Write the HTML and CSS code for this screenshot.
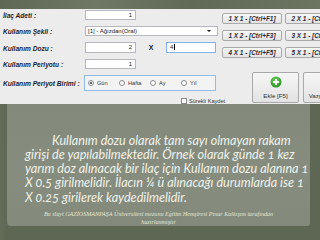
FILE: index.html
```html
<!DOCTYPE html>
<html lang="tr">
<head>
<meta charset="utf-8">
<title>Kullanım dozu</title>
<link rel="stylesheet" href="styles.css">
</head>
<body>
<div class="slide">
  <div class="topstrip"></div>
  <div class="panel">
    <div class="form">
      <div class="lbl">İlaç Adeti :</div>
      <div class="fields"><div class="input num">1</div></div>

      <div class="lbl">Kullanım Şekli :</div>
      <div class="fields"><div class="combo"><span>[1] - Ağızdan(Oral)</span><span class="arrow"></span></div></div>

      <div class="lbl">Kullanım Dozu :</div>
      <div class="fields dose">
        <div class="input num">2</div>
        <div class="times">X</div>
        <div class="input focus">4<span class="caret"></span></div>
      </div>

      <div class="lbl">Kullanım Periyotu :</div>
      <div class="fields"><div class="input num">1</div></div>

      <div class="lbl">Kullanım Periyot Birimi :</div>
      <div class="fields">
        <div class="radios">
          <label class="radio"><span class="dot on"></span>Gün</label>
          <label class="radio"><span class="dot"></span>Hafta</label>
          <label class="radio"><span class="dot"></span>Ay</label>
          <label class="radio"><span class="dot"></span>Yıl</label>
        </div>
      </div>

      <div></div>
      <div class="fields check-row"><span class="box"></span>Sürekli Kaydet</div>
    </div>
    <div class="side">
      <div class="hotkeys">
        <div class="hk">1 X 1 - [Ctrl+F1]</div>
        <div class="hk">2 X 1 - [Ctrl+F2]</div>
        <div class="hk">1 X 2 - [Ctrl+F3]</div>
        <div class="hk">3 X 1 - [Ctrl+F4]</div>
        <div class="hk">4 X 1 - [Ctrl+F5]</div>
        <div class="hk">5 X 1 - [Ctrl+F6]</div>
      </div>
      <div class="actions">
        <div class="big">
          <svg width="12" height="12" viewBox="0 0 12 12">
            <defs>
              <radialGradient id="g" cx="0.45" cy="0.35" r="0.7">
                <stop offset="0" stop-color="#6fd35a"/>
                <stop offset="1" stop-color="#1f8f1c"/>
              </radialGradient>
            </defs>
            <circle cx="6" cy="6" r="5.5" fill="url(#g)"/>
            <path d="M6 3v6M3 6h6" stroke="#fff" stroke-width="2"/>
          </svg>
          <span>Ekle [F5]</span>
        </div>
        <div class="big">
          <svg width="12" height="12" viewBox="0 0 12 12">
            <circle cx="6" cy="6" r="5.5" fill="#d9352c"/>
            <path d="M4 4l4 4M8 4l-4 4" stroke="#fff" stroke-width="1.6"/>
          </svg>
          <span>Vazgeç [Esc]</span>
        </div>
      </div>
    </div>
  </div>
  <div class="paper-area">
    <div class="paper">
      <p class="main">Kullanım dozu olarak tam sayı olmayan rakam<br>girişi de yapılabilmektedir. Örnek olarak günde 1 kez<br>yarım doz alınacak bir ilaç için Kullanım dozu alanına 1<br>X 0.5 girilmelidir. İlacın ¼ ü alınacağı durumlarda ise 1<br>X 0.25 girilerek kaydedilmelidir.</p>
      <p class="credit">Bu slayt GAZİOSMANPAŞA Üniversitesi mezunu Eğitim Hemşiresi Pınar Kalkışım tarafından<br>hazırlanmıştır</p>
    </div>
  </div>
</div>
</body>
</html>
```
FILE: styles.css
```css
* { box-sizing: border-box; }
html, body { margin: 0; padding: 0; }
body { width: 320px; height: 240px; overflow: hidden; }

.slide {
  width: 320px;
  height: 240px;
  display: flex;
  flex-direction: column;
  background: #5d6651;
  font-family: "Liberation Sans", Arial, sans-serif;
}

.topstrip {
  height: 9px;
  background: linear-gradient(90deg, #5e6854 0%, #6f7864 30%, #616a56 60%, #6c7560 100%);
}

.panel {
  height: 96px;
  background: #ececec;
  display: flex;
  overflow: hidden;
}

.form {
  width: 218px;
  flex: none;
  padding: 1px 0 0 3px;
  display: grid;
  grid-template-columns: 82px 1fr;
  grid-template-rows: 10px 10px 11px 10px 16px 8px;
  row-gap: 6px;
  align-items: center;
}

.lbl {
  font-weight: bold;
  font-style: italic;
  font-size: 6.6px;
  color: #1c1c2c;
  white-space: nowrap;
  padding-top: 2px;
}

.fields { display: flex; align-items: center; height: 100%; }

.input {
  width: 51px;
  height: 100%;
  background: #fff;
  border: 1px solid #b5b8c0;
  font-size: 6px;
  line-height: 8px;
  padding: 0 3px;
  color: #222;
  display: flex;
  align-items: center;
}
.input.num { justify-content: flex-end; }
.input.focus { border-color: #7eb4ea; width: 50px; }
.caret { width: 1px; height: 6px; background: #000; margin-left: 1px; }

.dose .times {
  width: 30px;
  text-align: center;
  font-weight: bold;
  font-size: 7px;
  color: #222;
}

.combo {
  width: 133px;
  height: 100%;
  background: #fff;
  border: 1px solid #b5b8c0;
  font-size: 6px;
  padding: 0 2px;
  color: #222;
  display: flex;
  align-items: center;
  justify-content: space-between;
}
.arrow {
  width: 0;
  height: 0;
  border-left: 2px solid transparent;
  border-right: 2px solid transparent;
  border-top: 2px solid #111;
  margin-right: 4px;
}

.radios {
  margin-left: -1px;
  width: 132px;
  height: 100%;
  border: 1px solid #8fbdeb;
  background: #f3f3f3;
  display: grid;
  grid-template-columns: repeat(4, 31px);
  align-items: center;
  padding-left: 3px;
}
.radio {
  display: flex;
  align-items: center;
  font-size: 5.6px;
  color: #333;
}
.dot {
  width: 6px;
  height: 6px;
  border-radius: 50%;
  border: 1px solid #8a8a8a;
  background: #fff;
  margin-right: 3px;
  display: flex;
  align-items: center;
  justify-content: center;
}
.dot.on::after {
  content: "";
  width: 2px;
  height: 2px;
  border-radius: 50%;
  background: #222;
}

.check-row {
  padding-left: 96px;
  font-size: 5.6px;
  color: #333;
  white-space: nowrap;
}
.box {
  width: 6px;
  height: 6px;
  border: 1px solid #8a8a8a;
  background: #fff;
  margin-right: 2px;
  flex: none;
}

.side {
  flex: 1;
  padding: 4px 0 0 4px;
  min-width: 0;
}
.hotkeys {
  display: grid;
  grid-template-columns: 60px 60px;
  grid-auto-rows: 11px;
  column-gap: 3px;
  row-gap: 6px;
}
.hk {
  background: linear-gradient(#f7f7f7, #e3e3e3);
  border: 1px solid #a9a9a9;
  border-radius: 2px;
  font-weight: bold;
  font-style: italic;
  font-size: 6.4px;
  color: #2a2a3a;
  display: flex;
  align-items: center;
  justify-content: center;
  white-space: nowrap;
  overflow: hidden;
}

.actions {
  display: flex;
  gap: 4px;
  margin: 14px 0 0 30px;
}
.big {
  width: 47px;
  height: 31px;
  flex: none;
  background: linear-gradient(#f6f6f6, #e2e2e2);
  border: 1px solid #a9a9a9;
  border-radius: 2px;
  display: flex;
  flex-direction: column;
  align-items: center;
  justify-content: center;
  gap: 4px;
  font-size: 6.2px;
  color: #333;
  white-space: nowrap;
}

.paper-area {
  flex: 1;
  padding: 0 10px 14px 7px;
  background: linear-gradient(90deg, #646d58 0px, #5e6753 7px, #5e6753 100%);
}
.paper {
  height: 100%;
  background: linear-gradient(180deg, #838a7b 0%, #868d7f 60%, #838a7b 100%);
  border-radius: 0 0 3px 4px;
  padding: 30px 0 0 18px;
}
.main {
  margin: 0;
  font-family: Lato, "Open Sans", sans-serif;
  font-style: italic;
  font-size: 12.6px;
  line-height: 14.3px;
  color: #f1f2ea;
  text-indent: 27px;
  white-space: nowrap;
  font-variant-numeric: oldstyle-nums;
}
.credit {
  margin: 5px 0 0 -18px;
  font-family: "Liberation Serif", serif;
  font-style: italic;
  font-size: 6.1px;
  line-height: 8px;
  color: #e2e6d6;
  text-align: center;
  white-space: nowrap;
}
```
